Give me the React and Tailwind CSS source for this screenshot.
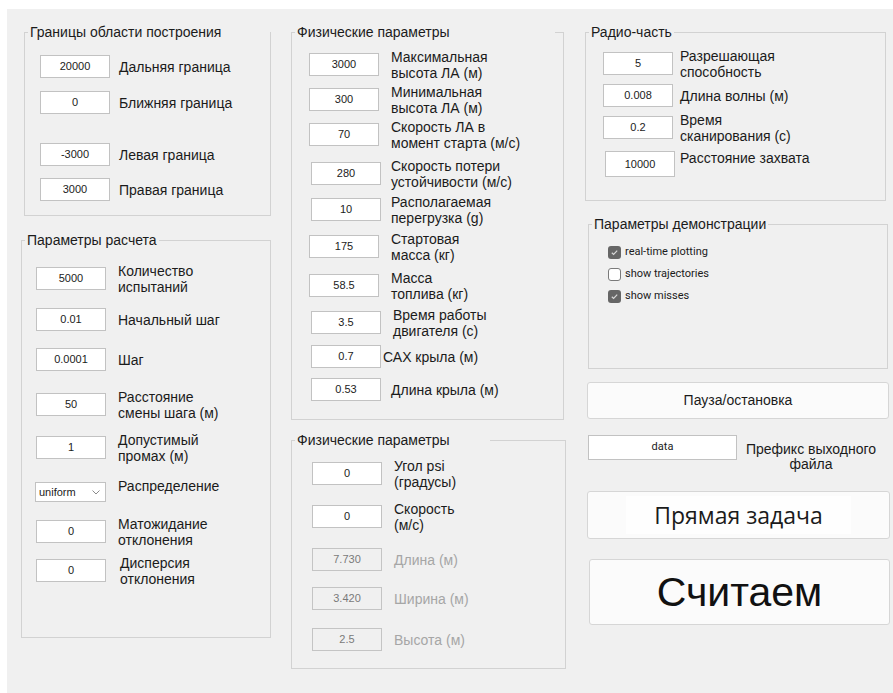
import React from "react";

const SANS = "font-['Liberation_Sans',Arial,sans-serif]";

function Group({ title, className, bodyClass = "", legendClass = "", children }) {
  return (
    <fieldset className={`border border-[#d2d2d2] min-w-0 ${className}`}>
      <legend
        className={`ml-[3px] px-[2px] text-[14px] leading-[16px] whitespace-nowrap text-[#1b1b1b] ${legendClass}`}
      >
        {title}
      </legend>
      <div className={bodyClass}>{children}</div>
    </fieldset>
  );
}

function Box({ value, disabled, className = "" }) {
  return (
    <div
      className={`w-[70px] h-[23px] shrink-0 flex items-center justify-center border text-[11px] ${
        disabled
          ? "bg-[#f0f0f0] border-[#c4c4c4] text-[#7a7a7a]"
          : "bg-white border-[#c2c2c2] text-[#1b1b1b]"
      } ${className}`}
    >
      {value}
    </div>
  );
}

function Row({ value, label, gap = "ml-[12px]", className = "", boxClass = "", disabled }) {
  return (
    <div className={`flex h-[23px] items-center ${className}`}>
      <Box value={value} disabled={disabled} className={boxClass} />
      <div
        className={`${gap} text-[14px] leading-[16px] whitespace-nowrap ${
          disabled ? "text-[#a6a6a6]" : "text-[#1b1b1b]"
        }`}
      >
        {label}
      </div>
    </div>
  );
}

function Check({ checked, label }) {
  return (
    <div className="flex items-center h-[22px]">
      {checked ? (
        <div className="w-[13px] h-[13px] rounded-[3px] bg-[#666666] flex items-center justify-center">
          <svg width="9" height="9" viewBox="0 0 9 9">
            <path d="M1.8 4.7 L3.6 6.4 L7.2 2.6" fill="none" stroke="#d8d8d8" strokeWidth="1.2" />
          </svg>
        </div>
      ) : (
        <div className="w-[13px] h-[13px] rounded-[3px] bg-white border border-[#7a7a7a]" />
      )}
      <span className="ml-[4px] text-[11px] text-[#1b1b1b] font-['Roboto',sans-serif]">{label}</span>
    </div>
  );
}

export default function App() {
  return (
    <div className={`w-[893px] h-[693px] bg-white pt-[9px] pl-[7px] ${SANS}`}>
      <div className="h-[684px] bg-[#f0f0f0] flex pl-[14px] pt-[15px]">
        {/* left column */}
        <div className="w-[250px] flex flex-col">
          <Group
            title="Границы области построения"
            className="ml-[3px] w-[247px] h-[192px]"
            bodyClass="pl-[15px]"
            legendClass="pr-[49px]"
          >
            <Row value="20000" label="Дальняя граница" gap="ml-[9px]" className="mt-[15px]" />
            <Row value="0" label="Ближняя граница" gap="ml-[9px]" className="mt-[13px]" />
            <Row value="-3000" label="Левая граница" gap="ml-[9px]" className="mt-[29px]" />
            <Row value="3000" label="Правая граница" gap="ml-[9px]" className="mt-[12px]" />
          </Group>

          <Group title="Параметры расчета" className="mt-[16px] w-[250px] h-[406px]" bodyClass="pl-[14px]">
            <Row value="5000" label={<>Количество<br />испытаний</>} className="mt-[19px]" />
            <Row value="0.01" label="Начальный шаг" className="mt-[18px]" />
            <Row value="0.0001" label="Шаг" className="mt-[17px]" />
            <Row value="50" label={<>Расстояние<br />смены шага (м)</>} className="mt-[22px]" />
            <Row value="1" label={<>Допустимый<br />промах (м)</>} className="mt-[20px]" />
            <div className="mt-[23px] flex items-start h-[20px]">
              <div className="w-[71px] h-[20px] -ml-[1px] bg-white border border-[#c2c2c2] flex items-center justify-between pl-[3px] pr-[5px] text-[11px] text-[#1b1b1b]">
                <span>uniform</span>
                <svg width="8" height="5" viewBox="0 0 8 5">
                  <path d="M0.5 0.5 L4 4 L7.5 0.5" fill="none" stroke="#8a8a8a" strokeWidth="1" />
                </svg>
              </div>
              <div className="ml-[12px] -mt-[4px] text-[14px] leading-[16px] text-[#1b1b1b]">Распределение</div>
            </div>
            <Row value="0" label={<>Матожидание<br />отклонения</>} className="mt-[18px]" />
            <Row value="0" label={<>Дисперсия<br />отклонения</>} gap="ml-[14px]" className="mt-[16px]" />
          </Group>
        </div>

        {/* middle column */}
        <div className="ml-[20px] w-[274px] flex flex-col">
          <Group
            title="Физические параметры"
            className="w-[273px] h-[396px]"
            bodyClass="pl-[17px]"
            legendClass="pr-[105px]"
          >
            <Row value="3000" label={<>Максимальная<br />высота ЛА (м)</>} className="mt-[13px]" />
            <Row value="300" label={<>Минимальная<br />высота ЛА (м)</>} className="mt-[12px]" />
            <Row value="70" label={<>Скорость ЛА в<br />момент старта (м/с)</>} className="mt-[12px]" />
            <Row value="280" label={<>Скорость потери<br />устойчивости (м/с)</>} boxClass="ml-[2px]" gap="ml-[10px]" className="mt-[16px]" />
            <Row value="10" label={<>Располагаемая<br />перегрузка (g)</>} boxClass="ml-[2px]" gap="ml-[10px]" className="mt-[13px]" />
            <Row value="175" label={<>Стартовая<br />масса (кг)</>} className="mt-[14px]" />
            <Row value="58.5" label={<>Масса<br />топлива (кг)</>} className="mt-[16px]" />
            <Row value="3.5" label={<>Время работы<br />двигателя (с)</>} boxClass="ml-[2px]" gap="ml-[12px]" className="mt-[14px]" />
            <Row value="0.7" label="САХ крыла (м)" boxClass="ml-[2px]" gap="ml-[2px]" className="mt-[11px]" />
            <Row value="0.53" label="Длина крыла (м)" boxClass="ml-[2px]" gap="ml-[10px]" className="mt-[10px]" />
          </Group>

          <Group
            title="Физические параметры"
            className="mt-[12px] w-[275px] h-[237px]"
            bodyClass="pl-[20px]"
            legendClass="pr-[40px]"
          >
            <Row value="0" label={<>Угол psi<br />(градусы)</>} className="mt-[14px]" />
            <Row value="0" label={<>Скорость<br />(м/с)</>} className="mt-[20px]" />
            <Row value="7.730" label="Длина (м)" disabled className="mt-[20px]" />
            <Row value="3.420" label="Ширина (м)" disabled className="mt-[16px]" />
            <Row value="2.5" label="Высота (м)" disabled className="mt-[18px]" />
          </Group>
        </div>

        {/* right column */}
        <div className="ml-[20px] w-[306px] flex flex-col">
          <Group title="Радио-часть" className="w-[301px] h-[177px]" bodyClass="pl-[17px]">
            <Row value="5" label={<>Разрешающая<br />способность</>} gap="ml-[7px]" className="mt-[12px]" />
            <Row value="0.008" label="Длина волны (м)" gap="ml-[7px]" className="mt-[9px]" />
            <Row value="0.2" label={<>Время<br />сканирования (с)</>} gap="ml-[7px]" className="mt-[9px]" />
            <div className="mt-[11px] flex items-start">
              <Box value="10000" className="ml-[2px] h-[26px] mt-[1px]" />
              <div className="ml-[5px] text-[14px] leading-[16px] text-[#1b1b1b]">Расстояние захвата</div>
            </div>
          </Group>

          <Group
            title="Параметры демонстрации"
            className="mt-[15px] ml-[3px] w-[300px] h-[153px]"
            bodyClass="pl-[19px]"
          >
            <div className="mt-[9px]">
              <Check checked label="real-time plotting" />
              <Check label="show trajectories" />
              <Check checked label="show misses" />
            </div>
          </Group>

          <button className="mt-[13px] ml-[2px] w-[302px] h-[37px] bg-[#fbfbfb] border border-[#d6d6d6] rounded-[3px] text-[14px] text-[#1b1b1b]">
            Пауза/остановка
          </button>

          <div className="mt-[16px] ml-[3px] h-[25px] flex items-start">
            <div className="w-[149px] h-[25px] bg-white border border-[#c2c2c2] flex items-center justify-center text-[11px] text-[#1b1b1b] font-['Roboto',sans-serif]">
              data
            </div>
            <div className="flex-1 text-center text-[14px] leading-[15px] pt-[7px] pr-[6px] text-[#1b1b1b]">
              Префикс выходного
              <br />
              файла
            </div>
          </div>

          <button className="mt-[31px] ml-[2px] w-[303px] h-[48px] bg-[#fbfbfb] border border-[#d6d6d6] rounded-[3px] flex items-center justify-center">
            <span className="bg-[#fefefe] px-[28px] py-[6px] text-[23px] leading-[26px] text-[#1b1b1b] font-['Open_Sans',sans-serif]">
              Прямая задача
            </span>
          </button>

          <button className="mt-[20px] ml-[4px] w-[301px] h-[66px] bg-[#fbfbfb] border border-[#d6d6d6] rounded-[3px] text-[41px] leading-[48px] text-[#111]">
            Считаем
          </button>
        </div>
      </div>
    </div>
  );
}
